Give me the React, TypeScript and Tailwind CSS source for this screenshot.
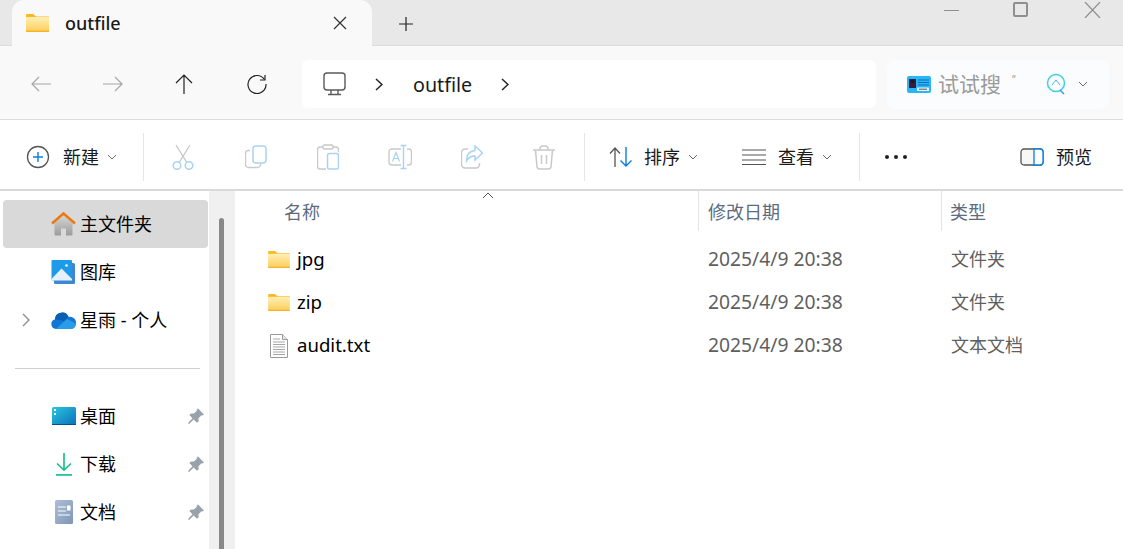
import React from 'react';

const FolderIcon = ({ w = 23, h = 18 }: { w?: number; h?: number }) => (
  <svg width={w} height={h} viewBox="0 0 23 18" className="shrink-0">
    <defs>
      <linearGradient id="folderFill" x1="0" y1="0" x2="0" y2="1">
        <stop offset="0" stopColor="#ffefb5" />
        <stop offset="1" stopColor="#fdcf5e" />
      </linearGradient>
    </defs>
    <path d="M0 1.2C0 .5.5 0 1.2 0h6L10 2.4h13V4H0z" fill="#fbb81f" />
    <rect x="0" y="3" width="23" height="14" fill="url(#folderFill)" />
    <rect x="0" y="16.6" width="23" height="1.4" fill="#f5b32a" />
  </svg>
);

const Chevron = ({ className = '' }: { className?: string }) => (
  <svg width="10" height="6" viewBox="0 0 10 6" className={className}>
    <path d="M1 1l4 4 4-4" fill="none" stroke="#6b6b6b" strokeWidth="1" />
  </svg>
);

const HomeIcon = () => (
  <svg width="25" height="24" viewBox="0 0 25 24">
    <defs>
      <linearGradient id="homeBody" x1="0" y1="0" x2="0" y2="1">
        <stop offset="0" stopColor="#d6d6d6" />
        <stop offset="1" stopColor="#9c9c9c" />
      </linearGradient>
    </defs>
    <path d="M3.5 11L12.5 3l9 8v11.5a1 1 0 01-1 1H15v-7h-5v7H4.5a1 1 0 01-1-1z" fill="url(#homeBody)" />
    <path d="M1 11.5L12.5 1.5 24 11.5" fill="none" stroke="#ea7a12" strokeWidth="2.6" />
  </svg>
);

const GalleryIcon = () => (
  <svg width="25" height="24" viewBox="0 0 25 24">
    <rect x="3" y="3" width="21" height="21" rx="1.5" fill="#3f87d0" />
    <rect x="0.5" y="0" width="20.5" height="20.5" rx="1" fill="#1e9be8" />
    <path d="M0.5 19L10.5 8.5 21 19v1.5H0.5z" fill="#e6f1fb" />
    <circle cx="15.5" cy="5.5" r="1.3" fill="#fff" />
  </svg>
);

const CloudIcon = () => (
  <svg width="25" height="17" viewBox="0 0 25 17">
    <path d="M5 17a5 5 0 01-1-9.800A7 7 0 0117.500 5 6 6 0 0125 11.500 5.500 5.500 0 0120 17z" fill="#0f78d4" />
    <path d="M4 7.200A7 7 0 0117.500 5L13 9z" fill="#0a5fb4" />
    <path d="M5 17h15a5.500 5.500 0 005-5.500L16 7z" fill="#2b9ce8" />
  </svg>
);

const DesktopIcon = () => (
  <svg width="24" height="18" viewBox="0 0 24 18">
    <defs>
      <linearGradient id="deskFill" x1="0" y1="0" x2="1" y2="1">
        <stop offset="0" stopColor="#2cc4de" />
        <stop offset="1" stopColor="#0a72ba" />
      </linearGradient>
    </defs>
    <rect width="24" height="18" rx="1.5" fill="url(#deskFill)" />
    <rect x="2" y="2" width="2" height="2" fill="#e8fbff" />
    <rect x="2" y="6" width="2" height="2" fill="#e8fbff" />
    <rect y="17" width="24" height="1" fill="#0b4f8f" />
  </svg>
);

const DownloadIcon = () => (
  <svg width="18" height="23" viewBox="0 0 18 23">
    <path d="M9 0v17M2 10.5L9 17l7-6.5" fill="none" stroke="#1fbf8f" strokeWidth="1.7" />
    <rect x="1" y="21" width="16" height="1.8" fill="#27c0a0" />
  </svg>
);

const DocIcon = () => (
  <svg width="18" height="24" viewBox="0 0 18 24">
    <defs>
      <linearGradient id="docFill" x1="0" y1="0" x2="1" y2="1">
        <stop offset="0" stopColor="#aebfd6" />
        <stop offset="1" stopColor="#7d96b4" />
      </linearGradient>
    </defs>
    <rect width="18" height="24" rx="1.5" fill="url(#docFill)" />
    <path d="M3 7h8M3 11h8M3 15h12" stroke="#fff" strokeWidth="1.2" />
    <rect x="12" y="5.5" width="3.5" height="5" fill="#fff" />
  </svg>
);

const PinIcon = () => (
  <svg width="16" height="16" viewBox="0 0 16 16">
    <path d="M10 .5L16 6.5l-1.5 1-1-.3-3 3 .1 3L9 14.8 5.700 11.500 1 16l-1-1 4.500-4.700L1.300 7 3 5.500l3 .1 3-3-.3-1z" fill="#99a1aa" />
  </svg>
);

const TxtIcon = () => (
  <svg width="18" height="24" viewBox="0 0 18 24">
    <path d="M.5.5h12l5 5v18H.5z" fill="#fff" stroke="#9a9a9a" />
    <path d="M12.500.5v5h5" fill="#e6e6e6" stroke="#9a9a9a" />
    <path d="M3 5h7M3 8h12M3 10.500h12M3 13h12M3 15.500h12M3 18h12M3 20.500h12" stroke="#a8a8a8" strokeWidth="1" />
  </svg>
);

// disabled toolbar icons: grey + pale blue
const grey = '#c9c9c9';
const blue = '#a9d3f3';

const CutIcon = () => (
  <svg width="22" height="26" viewBox="0 0 22 26" fill="none">
    <path d="M4 1l10.500 17M18 1L7.500 18" stroke={grey} strokeWidth="1.4" />
    <circle cx="5" cy="21.500" r="3.800" stroke={blue} strokeWidth="1.5" />
    <circle cx="17" cy="21.500" r="3.800" stroke={blue} strokeWidth="1.5" />
  </svg>
);

const CopyIcon = () => (
  <svg width="22" height="24" viewBox="0 0 22 24" fill="none">
    <path d="M5 5.500H3.500a3 3 0 00-3 3v11a3 3 0 003 3h9a3 3 0 003-3v-1" stroke={grey} strokeWidth="1.4" />
    <rect x="8" y="1" width="13" height="17" rx="3" stroke={blue} strokeWidth="1.5" />
  </svg>
);

const PasteIcon = () => (
  <svg width="22" height="26" viewBox="0 0 22 26" fill="none">
    <path d="M6 3H3a2.500 2.500 0 00-2.500 2.500v17A2.500 2.500 0 003 25h6M16 3h3a2.500 2.500 0 012.500 2.500V8" stroke={grey} strokeWidth="1.4" />
    <rect x="6" y="1" width="10" height="4" rx="1.500" stroke={grey} strokeWidth="1.4" />
    <rect x="10.500" y="9.500" width="11" height="15.500" rx="2" stroke={blue} strokeWidth="1.5" />
  </svg>
);

const RenameIcon = () => (
  <svg width="24" height="26" viewBox="0 0 24 26" fill="none">
    <path d="M13 5H4a3 3 0 00-3 3v10a3 3 0 003 3h9M19 5h1.500a3 3 0 013 3v10a3 3 0 01-3 3H19" stroke={grey} strokeWidth="1.4" />
    <path d="M12.500 1.500h6M15.500 1.500v23M12.500 24.500h6" stroke={blue} strokeWidth="1.400" />
    <path d="M4.500 17.500L8 8.500l3.500 9M5.800 14.500h4.400" stroke={blue} strokeWidth="1.200" />
  </svg>
);

const ShareIcon = () => (
  <svg width="22" height="24" viewBox="0 0 22 24" fill="none">
    <path d="M7 4H4a3.500 3.500 0 00-3.500 3.500v12A3.500 3.500 0 004 23h11a3.500 3.500 0 003.500-3.500V18" stroke={grey} strokeWidth="1.4" />
    <path d="M14 1l7.500 7L14 15v-4c-4 0-6.500 1.500-8.500 5 0-6 3-10 8.500-10.500z" stroke={blue} strokeWidth="1.5" />
  </svg>
);

const TrashIcon = () => (
  <svg width="22" height="25" viewBox="0 0 22 25" fill="none" stroke={grey} strokeWidth="1.500">
    <path d="M0 5h22M7 5V3.500A2.500 2.500 0 019.500 1h3A2.500 2.500 0 0115 3.500V5" />
    <path d="M2.500 5l1.500 17a2.500 2.500 0 002.500 2h9a2.500 2.500 0 002.500-2l1.500-17" />
    <path d="M8.500 10v9M13.500 10v9" />
  </svg>
);

const NavRow = ({
  icon,
  label,
  pinned,
  expand,
  selected,
}: {
  icon: React.ReactNode;
  label: string;
  pinned?: boolean;
  expand?: boolean;
  selected?: boolean;
}) => (
  <div className={`flex items-center h-12 rounded-sm ${selected ? 'bg-[#d9d9d9]' : ''}`}>
    <div className="w-[48px] flex justify-center pr-[3px]">
      {expand && (
        <svg width="8" height="14" viewBox="0 0 8 14">
          <path d="M1 1l6 6-6 6" fill="none" stroke="#8a8a8a" strokeWidth="1.300" />
        </svg>
      )}
    </div>
    <div className="w-[25px] flex justify-center">{icon}</div>
    <span className="ml-1 text-[18px] text-black">{label}</span>
    {pinned && (
      <span className="ml-auto mr-[4px]">
        <PinIcon />
      </span>
    )}
  </div>
);

const FileRow = ({ icon, name, type }: { icon: React.ReactNode; name: string; type: string }) => (
  <div className="flex items-center h-[43px]">
    <div className="w-[23px] flex justify-center shrink-0">{icon}</div>
    <span className="ml-[7px] w-[411px] text-[18.6px] text-black pb-[2px]">{name}</span>
    <span className="w-[243px] text-[19.3px] text-[#5f5f5f]">2025/4/9 20:38</span>
    <span className="text-[18px] text-[#5f5f5f]">{type}</span>
  </div>
);

const Sep = () => <div className="w-px h-12 bg-[#e6e6e6] shrink-0" />;

export default function App() {
  return (
    <div className="w-[1123px] h-[549px] overflow-hidden bg-white flex flex-col [font-family:'Noto_Sans','Noto_Sans_CJK_SC',sans-serif]">
      {/* tab strip */}
      <div className="h-[46px] bg-[#e8e8e8] border-b border-[#dcdcdc] flex items-start pl-3 shrink-0">
        <div className="w-[360px] h-[46px] bg-[#f9f9f9] rounded-t-xl flex items-center pl-[14px]">
          <FolderIcon />
          <span className="ml-4 text-[18px] font-medium text-[#1a1a1a]">outfile</span>
          <svg width="14" height="14" viewBox="0 0 14 14" className="ml-[212px]">
            <path d="M1 1l12 12M13 1L1 13" stroke="#333" strokeWidth="1.200" />
          </svg>
        </div>
        <svg width="16" height="16" viewBox="0 0 16 16" className="ml-[26px] mt-[16px]">
          <path d="M8 1v14M1 8h14" stroke="#222" strokeWidth="1.200" />
        </svg>
        <div className="ml-[530px] mt-[2px] flex items-start">
          <div className="w-[15px] h-px bg-[#8f8f8f] mt-2" />
          <div className="ml-[54px] w-[15px] h-[15px] border-2 border-[#8f8f8f] rounded-[2px]" />
          <svg width="17" height="16" viewBox="0 0 17 16" className="ml-[56px]">
            <path d="M1 0l15 16M16 0L1 16" stroke="#8f8f8f" strokeWidth="1.200" />
          </svg>
        </div>
      </div>

      {/* address bar */}
      <div className="h-[74px] bg-[#f9f9f9] border-b border-[#dcdcdc] flex items-center shrink-0 pt-[3px]">
        <div className="w-[302px] flex items-center pl-[31px] shrink-0">
          <svg width="20" height="16" viewBox="0 0 20 16" fill="none" stroke="#a6a6a6" strokeWidth="1.200">
            <path d="M20 8H1M8 1L1 8l7 7" />
          </svg>
          <svg width="20" height="16" viewBox="0 0 20 16" fill="none" stroke="#a6a6a6" strokeWidth="1.200" className="ml-[52px]">
            <path d="M0 8h19M12 1l7 7-7 7" />
          </svg>
          <svg width="18" height="20" viewBox="0 0 18 20" fill="none" stroke="#222" strokeWidth="1.200" className="ml-[52px]">
            <path d="M9 20V1M1 9l8-8 8 8" />
          </svg>
          <svg width="20" height="20" viewBox="0 0 20 20" fill="none" stroke="#222" strokeWidth="1.200" className="ml-[54px]">
            <path d="M17.500 5.500A9 9 0 1019 10" />
            <path d="M18 1v5h-5" />
          </svg>
        </div>
        <div className="w-[574px] h-[48px] bg-white rounded-md flex items-center pl-[21px] shrink-0">
          <svg width="23" height="24" viewBox="0 0 23 24" fill="none" stroke="#5a5a5a" strokeWidth="1.400">
            <rect x="1" y="1" width="21" height="17" rx="3" />
            <path d="M8 18v4M15 18v4M5 22.500h13" />
          </svg>
          <svg width="8" height="13" viewBox="0 0 8 13" fill="none" stroke="#222" strokeWidth="1.500" className="ml-[29px]">
            <path d="M1 1l6 5.500-6 5.500" />
          </svg>
          <span className="ml-[30px] text-[19.7px] text-[#1a1a1a] mt-[2px]">outfile</span>
          <svg width="8" height="13" viewBox="0 0 8 13" fill="none" stroke="#222" strokeWidth="1.500" className="ml-[29px]">
            <path d="M1 1l6 5.500-6 5.500" />
          </svg>
        </div>
        <div className="ml-[11px] w-[222px] h-[49px] bg-[#fbfcfe] rounded-lg flex items-center pl-5">
          <svg width="24" height="17" viewBox="0 0 24 17">
            <rect width="24" height="17" rx="2" fill="#29b6f6" />
            <rect x="2" y="3" width="7" height="9" fill="#3a1d3d" />
            <circle cx="5.500" cy="5.500" r="1.800" fill="#1a1a1a" />
            <path d="M11 4h11M11 6.500h11M11 9h11" stroke="#0d6fb8" strokeWidth="1" />
            <rect x="10" y="11.500" width="12" height="3.500" rx=".5" fill="#e6f4fb" />
            <path d="M12 13.200h8" stroke="#555" strokeWidth="1" />
          </svg>
          <span className="ml-[7px] text-[21px] text-[#9a9a9a] leading-none w-[108px]">试试搜<span className="text-[10px] align-top ml-[11px]">“</span></span>
          <svg width="20" height="22" viewBox="0 0 20 22" fill="none">
            <circle cx="10" cy="10" r="8.500" stroke="#3fd0e0" strokeWidth="1.500" />
            <path d="M6 12l4-5 4 5" stroke="#4bb0e8" strokeWidth="1" />
            <path d="M14 17l4 4" stroke="#2f9be8" strokeWidth="1.500" />
          </svg>
          <Chevron className="ml-[12px]" />
        </div>
      </div>

      {/* command bar */}
      <div className="h-[71px] bg-white border-b-2 border-[#d9d9d9] flex items-center shrink-0 text-[18px] text-[#1a1a1a] pt-[5px]">
        <svg width="24" height="24" viewBox="0 0 24 24" fill="none" className="ml-[26px] shrink-0">
          <circle cx="12" cy="12" r="10.500" stroke="#555" strokeWidth="1.300" />
          <path d="M12 7v10M7 12h10" stroke="#0a7fdc" strokeWidth="1.400" />
        </svg>
        <span className="ml-[13px]">新建</span>
        <Chevron className="ml-[8px]" />
        <div className="ml-[26px]"><Sep /></div>
        <div className="ml-[28px]"><CutIcon /></div>
        <div className="ml-[51px]"><CopyIcon /></div>
        <div className="ml-[50px]"><PasteIcon /></div>
        <div className="ml-[49px]"><RenameIcon /></div>
        <div className="ml-[49px]"><ShareIcon /></div>
        <div className="ml-[50px]"><TrashIcon /></div>
        <div className="ml-[29px]"><Sep /></div>
        <svg width="24" height="20" viewBox="0 0 24 20" fill="none" className="ml-[24px]">
          <path d="M6 20V1M1 6.500L6 1l5 5.500" stroke="#555" strokeWidth="1.300" />
          <path d="M17 0v19M11.500 13.500L17 19l5.500-5.500" stroke="#0a7fdc" strokeWidth="1.400" />
        </svg>
        <span className="ml-[11px]">排序</span>
        <Chevron className="ml-[8px]" />
        <svg width="24" height="16" viewBox="0 0 24 16" fill="none" stroke="#555" strokeWidth="1.200" className="ml-[44px]">
          <path d="M0 1h24M0 6h24M0 11h24M0 15.500h24" />
        </svg>
        <span className="ml-[12px]">查看</span>
        <Chevron className="ml-[8px]" />
        <div className="ml-[27px]"><Sep /></div>
        <div className="ml-[25px] flex gap-[5px]">
          <div className="w-1 h-1 rounded-full bg-[#222]" />
          <div className="w-1 h-1 rounded-full bg-[#222]" />
          <div className="w-1 h-1 rounded-full bg-[#222]" />
        </div>
        <svg width="24" height="18" viewBox="0 0 24 18" fill="none" className="ml-[113px]">
          <rect x="1" y="1" width="22" height="16" rx="3" fill="#f7f7f7" stroke="#555" strokeWidth="1.300" />
          <path d="M14 1h6a3 3 0 013 3v10a3 3 0 01-3 3h-6z" fill="#fff" stroke="#0a7fdc" strokeWidth="1.300" />
        </svg>
        <span className="ml-3">预览</span>
      </div>

      <div className="flex flex-1 min-h-0">
        {/* nav pane */}
        <div className="w-[209px] pl-[3px] pt-[9px] pr-px shrink-0">
          <NavRow selected icon={<HomeIcon />} label="主文件夹" />
          <NavRow icon={<GalleryIcon />} label="图库" />
          <NavRow expand icon={<CloudIcon />} label="星雨 - 个人" />
          <div className="h-12 flex items-center pl-3 pr-[8px]">
            <div className="w-full h-px bg-[#cfcfcf]" />
          </div>
          <NavRow pinned icon={<DesktopIcon />} label="桌面" />
          <NavRow pinned icon={<DownloadIcon />} label="下载" />
          <NavRow pinned icon={<DocIcon />} label="文档" />
        </div>

        {/* scroll gutter */}
        <div className="w-[26px] bg-[#f0f0f0] pl-[10px] pt-[27px] shrink-0">
          <div className="w-[5px] h-full bg-[#888888] rounded-t-sm" />
        </div>

        {/* file list */}
        <div className="flex-1 min-w-0 pl-[32px] relative">
          <div className="flex h-[40px] text-[18px] text-[#5c6b80] items-center">
            <span className="ml-[17px] w-[414px] mt-[3px]">名称</span>
            <div className="w-px h-full bg-[#e5e5e5] shrink-0" />
            <span className="ml-[9px] w-[233px] mt-[3px]">修改日期</span>
            <div className="w-px h-full bg-[#e5e5e5] shrink-0" />
            <span className="ml-[8px] mt-[3px]">类型</span>
          </div>
          <svg width="12" height="7" viewBox="0 0 12 7" className="absolute left-[247px] top-[1px]">
            <path d="M1 6l5-5 5 5" fill="none" stroke="#555" strokeWidth="1" />
          </svg>
          <div className="pt-[7px]">
            <FileRow icon={<FolderIcon w={22} h={17} />} name="jpg" type="文件夹" />
            <FileRow icon={<FolderIcon w={22} h={17} />} name="zip" type="文件夹" />
            <FileRow icon={<TxtIcon />} name="audit.txt" type="文本文档" />
          </div>
        </div>
      </div>
    </div>
  );
}
